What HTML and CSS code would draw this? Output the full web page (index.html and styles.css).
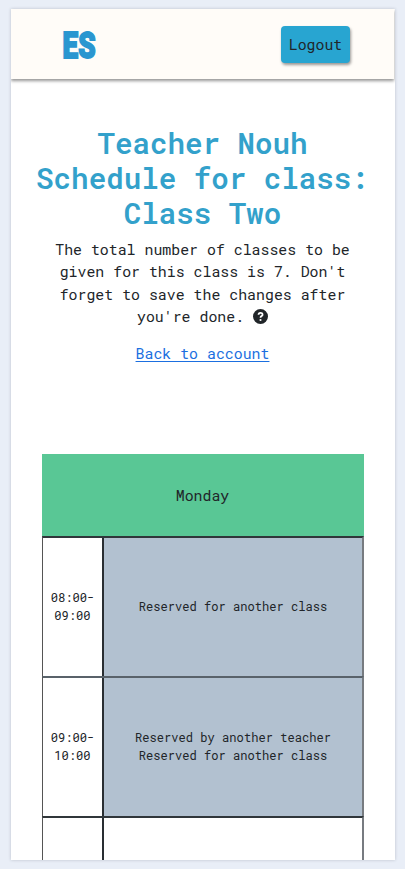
FILE: index.html
```
<!DOCTYPE html>
<html lang="en">
<head>
<meta charset="utf-8">
<title>Class schedule</title>
<link rel="stylesheet" href="styles.css">
</head>
<body>
<div class="screen">
  <header class="navbar">
    <svg class="logo" viewBox="0 0 36 32" aria-label="ES"><text class="logo-text" transform="translate(.6 28.6) scale(.66 1)" x="0" y="0" textLength="50" lengthAdjust="spacingAndGlyphs">ES</text></svg>
    <button class="logout">Logout</button>
  </header>
  <main>
    <h1>Teacher Nouh<br>Schedule for class:<br>Class Two</h1>
    <p class="intro">The total number of classes to be<br>given for this class is 7. Don't<br>forget to save the changes after<br>you're done. <svg class="help" viewBox="0 0 16 16"><circle cx="8" cy="8" r="8"/><path d="M5.9 6.2C5.9 3.3 10.2 3.4 10.2 6C10.2 7.6 8 7.5 8 9.2"/><circle class="dot" cx="8" cy="11.7" r="1.15"/></svg></p>
    <a class="back" href="#">Back to account</a>
    <section class="schedule">
      <div class="day">Monday</div>
      <div class="row"><div class="time">08:00-<br>09:00</div><div class="slot reserved">Reserved for another class</div></div>
      <div class="row muted"><div class="time">09:00-<br>10:00</div><div class="slot reserved">Reserved by another teacher<br>Reserved for another class</div></div>
      <div class="row"><div class="time"></div><div class="slot"></div></div>
    </section>
  </main>
</div>
</body>
</html>
```
FILE: styles.css
```
* { box-sizing: border-box; }
body {
  margin: 0;
  height: 869px;
  padding: 9px 10px 9px 11px;
  overflow: hidden;
  background: #e9eef7;
  color: #212529;
  font: 14.88px/22.3px "Roboto Mono", "DejaVu Sans Mono", monospace;
}
.screen {
  height: 851px;
  overflow: hidden;
  background: #fff;
  box-shadow: 0 0 3px rgba(80, 85, 100, .3);
}
.navbar {
  display: flex;
  justify-content: space-between;
  align-items: flex-start;
  height: 70px;
  margin-right: 1px;
  padding: 17px 44px 0 51px;
  background: #fffcf8;
  box-shadow: 0 2px 3px rgba(0, 0, 0, .42);
}
.logo { width: 36px; height: 32px; margin-top: 3px; overflow: visible; }
.logo-text {
  fill: #2a96d0;
  stroke: #2a96d0;
  stroke-width: 1.8px;
  font: 900 37.5px Roboto, sans-serif;
}
.logout {
  width: 69px;
  height: 37px;
  padding: 0;
  border: 0;
  border-radius: 4px;
  background: #28a5d1;
  color: #212529;
  font: inherit;
  box-shadow: 1px 2px 3px rgba(0, 0, 0, .4);
}
main {
  display: flex;
  flex-direction: column;
  align-items: center;
  padding: 46px 1px 0 0;
  text-align: center;
}
h1 {
  margin: 0 0 8px;
  color: #33a1cb;
  font-size: 29.2px;
  line-height: 35px;
  font-weight: 600;
  white-space: nowrap;
}
.intro { margin: 0 0 15px; white-space: nowrap; }
.help { width: 15px; height: 15px; vertical-align: -2px; fill: #212529; }
.help path { fill: none; stroke: #fff; stroke-width: 1.9; }
.help .dot { fill: #fff; }
.back { color: #1b6fe0; text-underline-offset: 2px; }
.schedule { width: 322px; margin-top: 90px; }
.day {
  display: flex;
  align-items: center;
  justify-content: center;
  height: 81.6px;
  background: #59c795;
}
.row {
  display: grid;
  grid-template-columns: 59px 1fr;
  height: 139.8px;
  border-top: 2px solid #30363a;
  border-left: 1px solid #555;
  border-right: 2px solid #777b80;
  font-size: 12.1px;
  line-height: 17.6px;
}
.muted { border-top-color: #59626a; }
.time, .slot {
  display: flex;
  align-items: center;
  justify-content: center;
  padding: 0 0 .4px 1px;
}
.slot { border-left: 2px solid #292e32; }
.reserved { background: #b2c1d0; }
```
